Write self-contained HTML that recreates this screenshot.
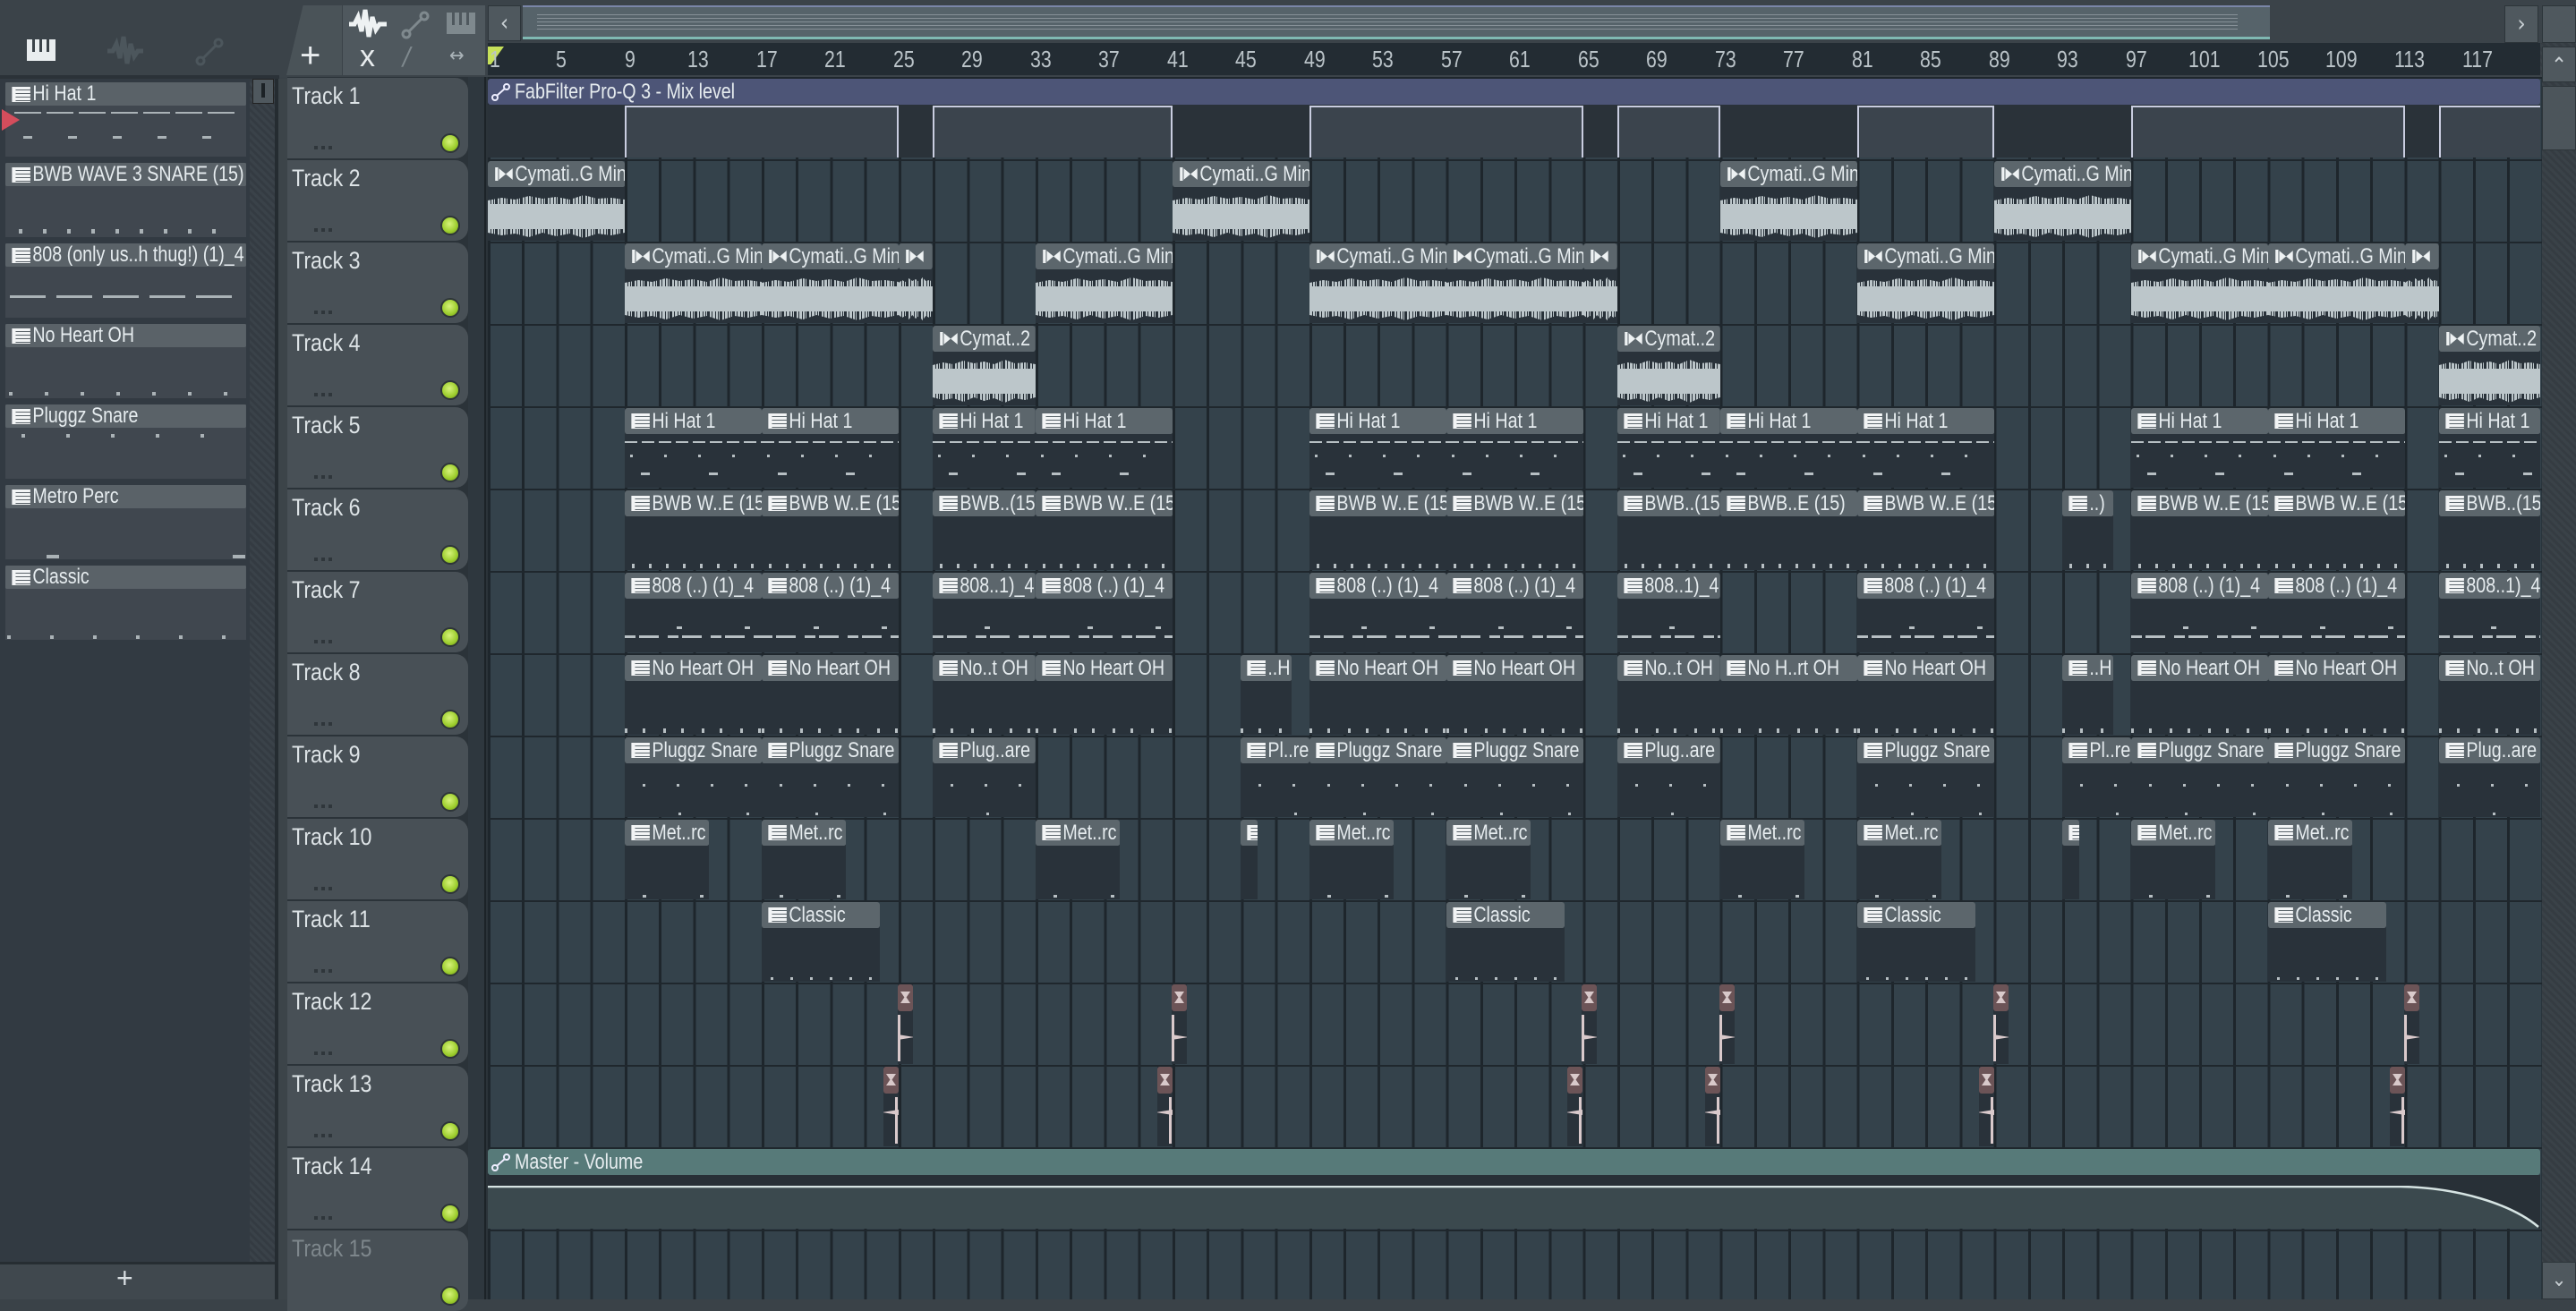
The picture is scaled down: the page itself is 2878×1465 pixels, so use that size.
<!DOCTYPE html>
<html><head><meta charset="utf-8"><style>
*{margin:0;padding:0;box-sizing:border-box}
body{width:2878px;height:1452px;overflow:hidden;background:#3a4248;position:relative;font-family:"Liberation Sans Narrow","DejaVu Sans Condensed","Liberation Sans",sans-serif;color:#e4eaed}
.ab{position:absolute}
#g{position:absolute;left:545px;top:86px;width:2295px;height:1366px;background:repeating-linear-gradient(180deg,#1f272d 0 2px,transparent 2px 92px),repeating-linear-gradient(90deg,#1e262c 0 3px,#34424b 3px 38.24px)}
.c{position:absolute;height:89px;background:#29323a;overflow:hidden;border-radius:3px 3px 0 0}
.h{height:29px;background:#5c666c;border-radius:3px;font-size:24px;line-height:29px;white-space:nowrap;padding-left:37px;position:relative;color:#e6ecef;overflow:hidden;width:122%;transform:scaleX(.82);transform-origin:0 0;font-family:"Liberation Sans",sans-serif}
.p .h::before{content:"";position:absolute;left:9px;top:6px;width:20px;height:17px;background:repeating-linear-gradient(180deg,#f2f4f5 0 3px,#5c666c 3px 4px);border-left:5px solid #f2f4f5}
.a .h::before{content:"";position:absolute;left:15px;top:8px;width:19px;height:13px;background:#eef2f3;clip-path:polygon(0 0,50% 50%,100% 0,100% 100%,50% 50%,0 100%)}
.a .h::after{content:"";position:absolute;left:10px;top:7px;width:4px;height:15px;background:#eef2f3}
.w{position:absolute;left:0;right:0;top:48px;height:28px;background:#bcc6ca}
.w::before,.w::after{content:"";position:absolute;left:0;right:0;height:10px;background:repeating-linear-gradient(90deg,#bcc6ca 0 3px,transparent 3px 4px,#bcc6ca 4px 6px,transparent 6px 7px,#bcc6ca 7px 8px,transparent 8px 11px,#bcc6ca 11px 13px,transparent 13px 14px)}
.w::before{top:-10px;clip-path:polygon(0 60%,10% 30%,20% 50%,30% 10%,40% 40%,50% 20%,60% 50%,70% 0,80% 40%,90% 30%,100% 50%,100% 100%,0 100%)}
.w::after{bottom:-10px;clip-path:polygon(0 0,100% 0,100% 40%,90% 70%,80% 50%,70% 100%,60% 50%,50% 80%,40% 40%,30% 90%,20% 50%,10% 70%,0 40%)}
.hh{background:repeating-linear-gradient(90deg,#b7bfc3 0 14px,transparent 14px 19px) 0 37px/100% 2px no-repeat,repeating-linear-gradient(90deg,transparent 0 6px,#b7bfc3 6px 9px,transparent 9px 38px) 0 52px/100% 3px no-repeat,repeating-linear-gradient(90deg,transparent 0 18px,#b7bfc3 18px 28px,transparent 28px 76px) 0 72px/100% 3px no-repeat,#29323a}
.sn{background:repeating-linear-gradient(90deg,transparent 0 8px,#b7bfc3 8px 11px,transparent 11px 19px) 0 82px/100% 5px no-repeat,#29323a}
.b8{background:repeating-linear-gradient(90deg,#b7bfc3 0 12px,transparent 12px 16px,#b7bfc3 16px 38px,transparent 38px 48px) 0 70px/100% 3px no-repeat,repeating-linear-gradient(90deg,transparent 0 58px,#b7bfc3 58px 64px,transparent 64px 76px) 0 60px/100% 3px no-repeat,#29323a}
.oh{background:repeating-linear-gradient(90deg,#b7bfc3 0 3px,transparent 3px 20px,#b7bfc3 20px 23px,transparent 23px 43px) 0 82px/100% 5px no-repeat,#29323a}
.pl{background:repeating-linear-gradient(90deg,transparent 0 20px,#b7bfc3 20px 23px,transparent 23px 38px) 0 52px/100% 3px no-repeat,repeating-linear-gradient(90deg,transparent 0 60px,#b7bfc3 60px 63px,transparent 63px 76px) 0 84px/100% 3px no-repeat,#29323a}
.mt{background:linear-gradient(#b7bfc3,#b7bfc3) 20px 84px/4px 3px no-repeat,linear-gradient(#b7bfc3,#b7bfc3) 84px 84px/4px 3px no-repeat,#29323a}
.cl{background:repeating-linear-gradient(90deg,transparent 0 10px,#b7bfc3 10px 13px,transparent 13px 22px) 0 84px/100% 3px no-repeat,#29323a}
.r{position:absolute;width:17px;height:89px;background:#29323a}
.r .h{padding:0;background:#6c5457;height:30px;width:auto;transform:none}
.r .h::before{content:"";position:absolute;left:3px;top:8px;width:11px;height:13px;background:#d8c9ca;clip-path:polygon(0 0,100% 0,60% 50%,100% 100%,0 100%,40% 50%)}
.r i{position:absolute;left:0;top:34px;width:3px;height:52px;background:#d9c9cb}
.r b{position:absolute;left:0;top:56px;width:17px;height:6px;background:#d9c9cb;clip-path:polygon(0 0,100% 45%,100% 55%,0 100%)}
.th{position:absolute;left:321px;width:202px;height:90px;background:#485056;border-radius:0 14px 14px 0}
.th span{position:absolute;left:5px;top:5px;font-size:27px;color:#dde3e6;transform:scaleX(.86);transform-origin:0 0;white-space:nowrap;font-family:"Liberation Sans",sans-serif}
.led{position:absolute;left:171px;top:62px;width:22px;height:22px;border-radius:50%;background:radial-gradient(circle at 45% 40%,#d6f27a,#9ccd2c 60%,#6a8c1e);border:2px solid #2e3538}
.dots{position:absolute;left:30px;top:76px;width:22px;height:4px;background:repeating-linear-gradient(90deg,#2f363b 0 4px,transparent 4px 8px)}
.li{position:absolute;left:6px;width:269px;height:83px;background:#40474f;overflow:hidden}
.li .h{background:#5a6268;height:26px;line-height:26px;font-size:24px;border-radius:2px}
.li .h::before{content:"";position:absolute;left:9px;top:5px;width:20px;height:17px;background:repeating-linear-gradient(180deg,#f2f4f5 0 3px,#5a6268 3px 4px);border-left:5px solid #f2f4f5}
.rl{position:absolute;top:51px;font-size:26px;color:#bac3c8;transform:scaleX(.82);transform-origin:0 0;font-family:"Liberation Sans",sans-serif}
.hi{position:absolute;top:118px;height:58px;background:#3b444d;border:2px solid #c9cde0;border-bottom:none}
.n{display:inline-block;transform:scaleX(.82);transform-origin:0 0;font-family:"Liberation Sans",sans-serif;font-size:24px}
</style></head><body>
<div class="ab" style="left:0;top:0;width:2878px;height:86px;background:#3b4349"></div>
<div class="ab" style="left:0;top:84px;width:312px;height:4px;background:#2b3238"></div>
<svg class="ab" style="left:30px;top:44px" width="32" height="24"><rect x="0" y="0" width="32" height="24" fill="#e9edef"/><rect x="6" y="0" width="3" height="14" fill="#3b4349"/><rect x="14" y="0" width="3" height="14" fill="#3b4349"/><rect x="22" y="0" width="3" height="14" fill="#3b4349"/></svg>
<svg class="ab" style="left:120px;top:40px" width="40" height="34"><path d="M0 17h6l4-8 4 16 4-24 4 30 4-22 4 14 4-6h6" stroke="#4c565c" stroke-width="5" fill="none"/></svg>
<svg class="ab" style="left:218px;top:42px" width="32" height="32"><circle cx="6" cy="26" r="4" stroke="#4c565c" stroke-width="3" fill="none"/><circle cx="26" cy="6" r="4" stroke="#4c565c" stroke-width="3" fill="none"/><line x1="9" y1="23" x2="23" y2="9" stroke="#4c565c" stroke-width="3"/></svg>
<div class="ab" style="left:320px;top:6px;width:62px;height:78px;background:#4a5358;clip-path:polygon(30% 0,100% 0,100% 100%,0 100%)"></div>
<div class="ab" style="left:335px;top:40px;font-size:40px;color:#e9edef;font-family:'Liberation Sans'">+</div>
<div class="ab" style="left:383px;top:6px;width:159px;height:78px;background:#4f585e"></div>
<svg class="ab" style="left:390px;top:10px" width="44" height="34"><path d="M0 17h6l4-8 4 16 4-24 4 30 4-22 4 14 4-6h8" stroke="#eef2f3" stroke-width="5" fill="none"/></svg>
<svg class="ab" style="left:448px;top:12px" width="32" height="32"><circle cx="6" cy="26" r="4" stroke="#7f898e" stroke-width="3" fill="none"/><circle cx="26" cy="6" r="4" stroke="#7f898e" stroke-width="3" fill="none"/><line x1="9" y1="23" x2="23" y2="9" stroke="#7f898e" stroke-width="3"/></svg>
<svg class="ab" style="left:499px;top:14px" width="32" height="24"><rect width="32" height="24" fill="#7f898e"/><rect x="6" width="3" height="14" fill="#4f585e"/><rect x="14" width="3" height="14" fill="#4f585e"/><rect x="22" width="3" height="14" fill="#4f585e"/></svg>
<div class="ab" style="left:402px;top:44px;font-size:34px;color:#e9edef;font-family:'Liberation Sans'">x</div>
<div class="ab" style="left:450px;top:46px;font-size:28px;color:#7f898e;font-style:italic">/</div>
<div class="ab" style="left:502px;top:50px;font-size:22px;color:#aab3b8">&#8596;</div>
<div class="ab" style="left:545px;top:6px;width:37px;height:40px;background:#4f585e;border:1px solid #2d353a;color:#c9d0d4;font-size:26px;text-align:center;line-height:38px">&lsaquo;</div>
<div class="ab" style="left:584px;top:6px;width:1952px;height:38px;background:#56636a;border-top:2px solid #7a86a8;border-bottom:3px solid #7fb8b2"></div>
<div class="ab" style="left:600px;top:16px;width:1900px;height:18px;background:repeating-linear-gradient(180deg,#9aa4aa 0 1px,transparent 1px 4px);opacity:.7"></div>
<div class="ab" style="left:2798px;top:6px;width:38px;height:42px;background:#4f585e;border:1px solid #2d353a;color:#c9d0d4;font-size:26px;text-align:center;line-height:40px">&rsaquo;</div>
<div class="ab" style="left:2840px;top:6px;width:38px;height:42px;background:#4f585e;border:1px solid #2d353a"></div>
<div class="ab" style="left:545px;top:48px;width:2293px;height:36px;background:#232c33"></div>
<div class="ab" style="left:545px;top:52px;width:18px;height:20px;background:#c6e05a;clip-path:polygon(0 0,100% 0,20% 100%,0 100%)"></div>
<div class="rl" style="left:547px">1</div><div class="rl" style="left:621px">5</div><div class="rl" style="left:698px">9</div><div class="rl" style="left:768px">13</div><div class="rl" style="left:845px">17</div><div class="rl" style="left:921px">21</div><div class="rl" style="left:998px">25</div><div class="rl" style="left:1074px">29</div><div class="rl" style="left:1151px">33</div><div class="rl" style="left:1227px">37</div><div class="rl" style="left:1304px">41</div><div class="rl" style="left:1380px">45</div><div class="rl" style="left:1457px">49</div><div class="rl" style="left:1533px">53</div><div class="rl" style="left:1610px">57</div><div class="rl" style="left:1686px">61</div><div class="rl" style="left:1763px">65</div><div class="rl" style="left:1839px">69</div><div class="rl" style="left:1916px">73</div><div class="rl" style="left:1992px">77</div><div class="rl" style="left:2069px">81</div><div class="rl" style="left:2145px">85</div><div class="rl" style="left:2222px">89</div><div class="rl" style="left:2298px">93</div><div class="rl" style="left:2375px">97</div><div class="rl" style="left:2445px">101</div><div class="rl" style="left:2522px">105</div><div class="rl" style="left:2598px">109</div><div class="rl" style="left:2675px">113</div><div class="rl" style="left:2751px">117</div>
<div class="ab" style="left:2838px;top:48px;width:40px;height:1404px;background:repeating-linear-gradient(45deg,#3a4248 0 3px,#353c42 3px 6px)"></div>
<div class="ab" style="left:2840px;top:52px;width:38px;height:40px;background:#4f585e;border:1px solid #2d353a;color:#c9d0d4;font-size:24px;text-align:center;line-height:40px">&#8963;</div>
<div class="ab" style="left:2840px;top:96px;width:38px;height:72px;background:#4c555b;border:1px solid #2d353a"></div>
<div class="ab" style="left:2840px;top:1410px;width:38px;height:42px;background:#4f585e;border:1px solid #2d353a;color:#c9d0d4;font-size:22px;text-align:center;line-height:40px">&#8964;</div>
<div class="ab" style="left:0;top:88px;width:308px;height:1322px;background:#323a42"></div>
<div class="ab" style="left:279px;top:88px;width:28px;height:1322px;background:repeating-linear-gradient(45deg,#3a4249 0 3px,#343b42 3px 6px)"></div>
<div class="ab" style="left:282px;top:88px;width:24px;height:28px;background:#4f585e;border:1px solid #222"></div>
<div class="ab" style="left:292px;top:93px;width:4px;height:16px;background:#1c2226"></div>
<div class="ab" style="left:307px;top:88px;width:14px;height:1364px;background:#3c4449;border-left:4px solid #252c31"></div>
<div class="ab" style="left:0;top:1410px;width:307px;height:42px;background:#40484e;border-top:3px solid #262d32"></div>
<div class="ab" style="left:130px;top:1410px;font-size:32px;color:#d8dee1;font-family:'Liberation Sans'">+</div>
<div class="li" style="top:92px"><div class="h">Hi Hat 1</div><div class="ab" style="left:10px;top:33px;width:250px;height:2px;background:repeating-linear-gradient(90deg,#aab2b6 0 30px,transparent 30px 36px)"></div><div class="ab" style="left:20px;top:60px;width:240px;height:3px;background:repeating-linear-gradient(90deg,#aab2b6 0 10px,transparent 10px 50px)"></div></div>
<div class="ab" style="left:2px;top:122px;width:20px;height:24px;background:#d44d5c;clip-path:polygon(0 0,100% 50%,0 100%)"></div>
<div class="li" style="top:182px"><div class="h">BWB WAVE 3 SNARE (15)</div><div class="ab" style="left:15px;top:74px;width:240px;height:5px;background:repeating-linear-gradient(90deg,#aab2b6 0 4px,transparent 4px 27px)"></div></div>
<div class="li" style="top:272px"><div class="h">808 (only us..h thug!) (1)_4</div><div class="ab" style="left:5px;top:58px;width:260px;height:3px;background:repeating-linear-gradient(90deg,#aab2b6 0 40px,transparent 40px 52px)"></div></div>
<div class="li" style="top:362px"><div class="h">No Heart OH</div><div class="ab" style="left:4px;top:76px;width:262px;height:4px;background:repeating-linear-gradient(90deg,#aab2b6 0 4px,transparent 4px 40px)"></div></div>
<div class="li" style="top:452px"><div class="h">Pluggz Snare</div><div class="ab" style="left:18px;top:33px;width:240px;height:4px;background:repeating-linear-gradient(90deg,#aab2b6 0 4px,transparent 4px 50px)"></div></div>
<div class="li" style="top:542px"><div class="h">Metro Perc</div><div class="ab" style="left:46px;top:78px;width:14px;height:4px;background:#aab2b6"></div><div class="ab" style="left:254px;top:78px;width:14px;height:4px;background:#aab2b6"></div></div>
<div class="li" style="top:632px"><div class="h">Classic</div><div class="ab" style="left:2px;top:78px;width:264px;height:4px;background:repeating-linear-gradient(90deg,#aab2b6 0 4px,transparent 4px 48px)"></div></div>
<div class="ab" style="left:321px;top:86px;width:224px;height:1366px;background:#2b3339"></div>
<div class="ab" style="left:523px;top:86px;width:20px;height:1366px;background:#2e373e;border-right:2px solid #1c2328"></div>
<div class="th" style="top:87px"><span>Track 1</span><i class="dots"></i><i class="led"></i></div>
<div class="th" style="top:179px"><span>Track 2</span><i class="dots"></i><i class="led"></i></div>
<div class="th" style="top:271px"><span>Track 3</span><i class="dots"></i><i class="led"></i></div>
<div class="th" style="top:363px"><span>Track 4</span><i class="dots"></i><i class="led"></i></div>
<div class="th" style="top:455px"><span>Track 5</span><i class="dots"></i><i class="led"></i></div>
<div class="th" style="top:547px"><span>Track 6</span><i class="dots"></i><i class="led"></i></div>
<div class="th" style="top:639px"><span>Track 7</span><i class="dots"></i><i class="led"></i></div>
<div class="th" style="top:731px"><span>Track 8</span><i class="dots"></i><i class="led"></i></div>
<div class="th" style="top:823px"><span>Track 9</span><i class="dots"></i><i class="led"></i></div>
<div class="th" style="top:915px"><span>Track 10</span><i class="dots"></i><i class="led"></i></div>
<div class="th" style="top:1007px"><span>Track 11</span><i class="dots"></i><i class="led"></i></div>
<div class="th" style="top:1099px"><span>Track 12</span><i class="dots"></i><i class="led"></i></div>
<div class="th" style="top:1191px"><span>Track 13</span><i class="dots"></i><i class="led"></i></div>
<div class="th" style="top:1283px"><span>Track 14</span><i class="dots"></i><i class="led"></i></div>
<div class="th" style="top:1375px"><span style="color:#7e878c">Track 15</span><i class="led"></i></div>
<div id="g"></div>
<div class="ab" style="left:545px;top:117px;width:2293px;height:59px;background:#2a3239"></div>
<div class="hi" style="left:698px;width:306px"></div><div class="hi" style="left:1042px;width:268px"></div><div class="hi" style="left:1463px;width:306px"></div><div class="hi" style="left:1807px;width:115px"></div><div class="hi" style="left:2075px;width:153px"></div><div class="hi" style="left:2381px;width:306px"></div><div class="hi" style="left:2725px;width:113px;border-right:none"></div>
<div class="ab" style="left:545px;top:88px;width:2293px;height:29px;background:#4d5577;border-radius:3px;line-height:29px;padding-left:30px;color:#e6ecef"><span class="n">FabFilter Pro-Q 3 - Mix level</span></div>
<svg class="ab" style="left:549px;top:93px" width="22" height="20"><circle cx="4" cy="16" r="3" stroke="#eef" stroke-width="2" fill="none"/><circle cx="17" cy="4" r="3" stroke="#eef" stroke-width="2" fill="none"/><line x1="6" y1="14" x2="15" y2="6" stroke="#eef" stroke-width="2"/></svg>
<div class="c a" style="left:545px;top:180px;width:153px"><div class="h">Cymati..G Min</div><div class="w"></div></div>
<div class="c a" style="left:1310px;top:180px;width:153px"><div class="h">Cymati..G Min</div><div class="w"></div></div>
<div class="c a" style="left:1922px;top:180px;width:153px"><div class="h">Cymati..G Min</div><div class="w"></div></div>
<div class="c a" style="left:2228px;top:180px;width:153px"><div class="h">Cymati..G Min</div><div class="w"></div></div>
<div class="c a" style="left:698px;top:272px;width:153px"><div class="h">Cymati..G Min</div><div class="w"></div></div>
<div class="c a" style="left:851px;top:272px;width:153px"><div class="h">Cymati..G Min</div><div class="w"></div></div>
<div class="c a" style="left:1004px;top:272px;width:38px"><div class="h"></div><div class="w"></div></div>
<div class="c a" style="left:1157px;top:272px;width:153px"><div class="h">Cymati..G Min</div><div class="w"></div></div>
<div class="c a" style="left:1463px;top:272px;width:153px"><div class="h">Cymati..G Min</div><div class="w"></div></div>
<div class="c a" style="left:1616px;top:272px;width:153px"><div class="h">Cymati..G Min</div><div class="w"></div></div>
<div class="c a" style="left:1769px;top:272px;width:38px"><div class="h"></div><div class="w"></div></div>
<div class="c a" style="left:2075px;top:272px;width:153px"><div class="h">Cymati..G Min</div><div class="w"></div></div>
<div class="c a" style="left:2381px;top:272px;width:153px"><div class="h">Cymati..G Min</div><div class="w"></div></div>
<div class="c a" style="left:2534px;top:272px;width:153px"><div class="h">Cymati..G Min</div><div class="w"></div></div>
<div class="c a" style="left:2687px;top:272px;width:38px"><div class="h"></div><div class="w"></div></div>
<div class="c a" style="left:1042px;top:364px;width:115px"><div class="h">Cymat..2</div><div class="w"></div></div>
<div class="c a" style="left:1807px;top:364px;width:115px"><div class="h">Cymat..2</div><div class="w"></div></div>
<div class="c a" style="left:2725px;top:364px;width:113px"><div class="h">Cymat..2</div><div class="w"></div></div>
<div class="c p hh" style="left:698px;top:456px;width:153px"><div class="h">Hi Hat 1</div></div>
<div class="c p hh" style="left:851px;top:456px;width:153px"><div class="h">Hi Hat 1</div></div>
<div class="c p hh" style="left:1042px;top:456px;width:115px"><div class="h">Hi Hat 1</div></div>
<div class="c p hh" style="left:1157px;top:456px;width:153px"><div class="h">Hi Hat 1</div></div>
<div class="c p hh" style="left:1463px;top:456px;width:153px"><div class="h">Hi Hat 1</div></div>
<div class="c p hh" style="left:1616px;top:456px;width:153px"><div class="h">Hi Hat 1</div></div>
<div class="c p hh" style="left:1807px;top:456px;width:115px"><div class="h">Hi Hat 1</div></div>
<div class="c p hh" style="left:1922px;top:456px;width:153px"><div class="h">Hi Hat 1</div></div>
<div class="c p hh" style="left:2075px;top:456px;width:153px"><div class="h">Hi Hat 1</div></div>
<div class="c p hh" style="left:2381px;top:456px;width:153px"><div class="h">Hi Hat 1</div></div>
<div class="c p hh" style="left:2534px;top:456px;width:153px"><div class="h">Hi Hat 1</div></div>
<div class="c p hh" style="left:2725px;top:456px;width:113px"><div class="h">Hi Hat 1</div></div>
<div class="c p sn" style="left:698px;top:548px;width:153px"><div class="h">BWB W..E (15)</div></div>
<div class="c p sn" style="left:851px;top:548px;width:153px"><div class="h">BWB W..E (15)</div></div>
<div class="c p sn" style="left:1042px;top:548px;width:115px"><div class="h">BWB..(15)</div></div>
<div class="c p sn" style="left:1157px;top:548px;width:153px"><div class="h">BWB W..E (15)</div></div>
<div class="c p sn" style="left:1463px;top:548px;width:153px"><div class="h">BWB W..E (15)</div></div>
<div class="c p sn" style="left:1616px;top:548px;width:153px"><div class="h">BWB W..E (15)</div></div>
<div class="c p sn" style="left:1807px;top:548px;width:115px"><div class="h">BWB..(15)</div></div>
<div class="c p sn" style="left:1922px;top:548px;width:153px"><div class="h">BWB..E (15)</div></div>
<div class="c p sn" style="left:2075px;top:548px;width:153px"><div class="h">BWB W..E (15)</div></div>
<div class="c p sn" style="left:2304px;top:548px;width:57px"><div class="h">..)</div></div>
<div class="c p sn" style="left:2381px;top:548px;width:153px"><div class="h">BWB W..E (15)</div></div>
<div class="c p sn" style="left:2534px;top:548px;width:153px"><div class="h">BWB W..E (15)</div></div>
<div class="c p sn" style="left:2725px;top:548px;width:113px"><div class="h">BWB..(15)</div></div>
<div class="c p b8" style="left:698px;top:640px;width:153px"><div class="h">808 (..) (1)_4</div></div>
<div class="c p b8" style="left:851px;top:640px;width:153px"><div class="h">808 (..) (1)_4</div></div>
<div class="c p b8" style="left:1042px;top:640px;width:115px"><div class="h">808..1)_4</div></div>
<div class="c p b8" style="left:1157px;top:640px;width:153px"><div class="h">808 (..) (1)_4</div></div>
<div class="c p b8" style="left:1463px;top:640px;width:153px"><div class="h">808 (..) (1)_4</div></div>
<div class="c p b8" style="left:1616px;top:640px;width:153px"><div class="h">808 (..) (1)_4</div></div>
<div class="c p b8" style="left:1807px;top:640px;width:115px"><div class="h">808..1)_4</div></div>
<div class="c p b8" style="left:2075px;top:640px;width:153px"><div class="h">808 (..) (1)_4</div></div>
<div class="c p b8" style="left:2381px;top:640px;width:153px"><div class="h">808 (..) (1)_4</div></div>
<div class="c p b8" style="left:2534px;top:640px;width:153px"><div class="h">808 (..) (1)_4</div></div>
<div class="c p b8" style="left:2725px;top:640px;width:113px"><div class="h">808..1)_4</div></div>
<div class="c p oh" style="left:698px;top:732px;width:153px"><div class="h">No Heart OH</div></div>
<div class="c p oh" style="left:851px;top:732px;width:153px"><div class="h">No Heart OH</div></div>
<div class="c p oh" style="left:1042px;top:732px;width:115px"><div class="h">No..t OH</div></div>
<div class="c p oh" style="left:1157px;top:732px;width:153px"><div class="h">No Heart OH</div></div>
<div class="c p oh" style="left:1386px;top:732px;width:57px"><div class="h">..H</div></div>
<div class="c p oh" style="left:1463px;top:732px;width:153px"><div class="h">No Heart OH</div></div>
<div class="c p oh" style="left:1616px;top:732px;width:153px"><div class="h">No Heart OH</div></div>
<div class="c p oh" style="left:1807px;top:732px;width:115px"><div class="h">No..t OH</div></div>
<div class="c p oh" style="left:1922px;top:732px;width:153px"><div class="h">No H..rt OH</div></div>
<div class="c p oh" style="left:2075px;top:732px;width:153px"><div class="h">No Heart OH</div></div>
<div class="c p oh" style="left:2304px;top:732px;width:57px"><div class="h">..H</div></div>
<div class="c p oh" style="left:2381px;top:732px;width:153px"><div class="h">No Heart OH</div></div>
<div class="c p oh" style="left:2534px;top:732px;width:153px"><div class="h">No Heart OH</div></div>
<div class="c p oh" style="left:2725px;top:732px;width:113px"><div class="h">No..t OH</div></div>
<div class="c p pl" style="left:698px;top:824px;width:153px"><div class="h">Pluggz Snare</div></div>
<div class="c p pl" style="left:851px;top:824px;width:153px"><div class="h">Pluggz Snare</div></div>
<div class="c p pl" style="left:1042px;top:824px;width:115px"><div class="h">Plug..are</div></div>
<div class="c p pl" style="left:1386px;top:824px;width:77px"><div class="h">Pl..re</div></div>
<div class="c p pl" style="left:1463px;top:824px;width:153px"><div class="h">Pluggz Snare</div></div>
<div class="c p pl" style="left:1616px;top:824px;width:153px"><div class="h">Pluggz Snare</div></div>
<div class="c p pl" style="left:1807px;top:824px;width:115px"><div class="h">Plug..are</div></div>
<div class="c p pl" style="left:2075px;top:824px;width:153px"><div class="h">Pluggz Snare</div></div>
<div class="c p pl" style="left:2304px;top:824px;width:77px"><div class="h">Pl..re</div></div>
<div class="c p pl" style="left:2381px;top:824px;width:153px"><div class="h">Pluggz Snare</div></div>
<div class="c p pl" style="left:2534px;top:824px;width:153px"><div class="h">Pluggz Snare</div></div>
<div class="c p pl" style="left:2725px;top:824px;width:113px"><div class="h">Plug..are</div></div>
<div class="c p mt" style="left:698px;top:916px;width:94px"><div class="h">Met..rc</div></div>
<div class="c p mt" style="left:851px;top:916px;width:94px"><div class="h">Met..rc</div></div>
<div class="c p mt" style="left:1157px;top:916px;width:94px"><div class="h">Met..rc</div></div>
<div class="c p mt" style="left:1386px;top:916px;width:19px"><div class="h"></div></div>
<div class="c p mt" style="left:1463px;top:916px;width:94px"><div class="h">Met..rc</div></div>
<div class="c p mt" style="left:1616px;top:916px;width:94px"><div class="h">Met..rc</div></div>
<div class="c p mt" style="left:1922px;top:916px;width:94px"><div class="h">Met..rc</div></div>
<div class="c p mt" style="left:2075px;top:916px;width:94px"><div class="h">Met..rc</div></div>
<div class="c p mt" style="left:2304px;top:916px;width:19px"><div class="h"></div></div>
<div class="c p mt" style="left:2381px;top:916px;width:94px"><div class="h">Met..rc</div></div>
<div class="c p mt" style="left:2534px;top:916px;width:94px"><div class="h">Met..rc</div></div>
<div class="c p cl" style="left:851px;top:1008px;width:132px"><div class="h">Classic</div></div>
<div class="c p cl" style="left:1616px;top:1008px;width:132px"><div class="h">Classic</div></div>
<div class="c p cl" style="left:2075px;top:1008px;width:132px"><div class="h">Classic</div></div>
<div class="c p cl" style="left:2534px;top:1008px;width:132px"><div class="h">Classic</div></div>
<div class="r" style="left:1003px;top:1100px"><div class="h"></div><i></i><b></b></div>
<div class="r" style="left:1309px;top:1100px"><div class="h"></div><i></i><b></b></div>
<div class="r" style="left:1767px;top:1100px"><div class="h"></div><i></i><b></b></div>
<div class="r" style="left:1921px;top:1100px"><div class="h"></div><i></i><b></b></div>
<div class="r" style="left:2227px;top:1100px"><div class="h"></div><i></i><b></b></div>
<div class="r" style="left:2686px;top:1100px"><div class="h"></div><i></i><b></b></div>
<div class="r" style="left:987px;top:1192px"><div class="h"></div><i style="left:13px"></i><b style="top:48px;transform:scaleX(-1)"></b></div>
<div class="r" style="left:1293px;top:1192px"><div class="h"></div><i style="left:13px"></i><b style="top:48px;transform:scaleX(-1)"></b></div>
<div class="r" style="left:1751px;top:1192px"><div class="h"></div><i style="left:13px"></i><b style="top:48px;transform:scaleX(-1)"></b></div>
<div class="r" style="left:1905px;top:1192px"><div class="h"></div><i style="left:13px"></i><b style="top:48px;transform:scaleX(-1)"></b></div>
<div class="r" style="left:2211px;top:1192px"><div class="h"></div><i style="left:13px"></i><b style="top:48px;transform:scaleX(-1)"></b></div>
<div class="r" style="left:2670px;top:1192px"><div class="h"></div><i style="left:13px"></i><b style="top:48px;transform:scaleX(-1)"></b></div>
<div class="ab" style="left:545px;top:1313px;width:2293px;height:60px;background:#283037"></div>
<svg class="ab" style="left:545px;top:1325px" width="2293" height="48"><path d="M0 1 H2137 C2200 2 2260 20 2291 46 V48 H0Z" fill="#3e4d52" opacity=".85"/><path d="M0 1 H2137 C2200 2 2260 20 2291 46" stroke="#d6e4e3" stroke-width="2.5" fill="none"/></svg>
<div class="ab" style="left:545px;top:1284px;width:2293px;height:29px;background:#577a79;border-radius:3px;line-height:29px;padding-left:30px;color:#e6ecef"><span class="n">Master - Volume</span></div>
<svg class="ab" style="left:549px;top:1289px" width="22" height="20"><circle cx="4" cy="16" r="3" stroke="#eef" stroke-width="2" fill="none"/><circle cx="17" cy="4" r="3" stroke="#eef" stroke-width="2" fill="none"/><line x1="6" y1="14" x2="15" y2="6" stroke="#eef" stroke-width="2"/></svg>
</body></html>
